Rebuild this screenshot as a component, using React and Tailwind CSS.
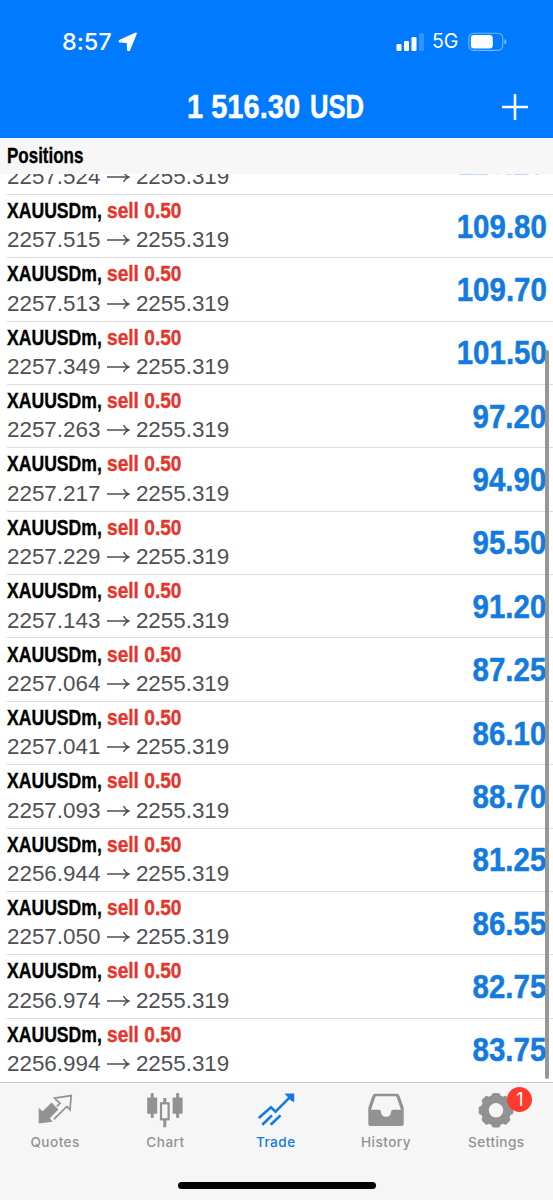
import React from "react";

const POSITIONS = [
  ["2257.524", "110.25"],
  ["2257.515", "109.80"],
  ["2257.513", "109.70"],
  ["2257.349", "101.50"],
  ["2257.263", "97.20"],
  ["2257.217", "94.90"],
  ["2257.229", "95.50"],
  ["2257.143", "91.20"],
  ["2257.064", "87.25"],
  ["2257.041", "86.10"],
  ["2257.093", "88.70"],
  ["2256.944", "81.25"],
  ["2257.050", "86.55"],
  ["2256.974", "82.75"],
  ["2256.994", "83.75"],
];

function StatusBar() {
  return (
    <div className="flex h-[83px] items-center pr-[46px] pl-[62px] font-['Inter',sans-serif]">
      <span className="w-[56px] pt-[1px] text-[23.5px] leading-none font-medium tracking-[-0.1px] whitespace-nowrap">8:57</span>
      <svg className="h-[20px] w-[20px]" viewBox="0 0 20 20" fill="currentColor" stroke="currentColor" strokeWidth="1.8" strokeLinejoin="round">
        <path d="M18 1.4 11.2 18.2 10 18.2 9.6 10.8 8.8 10.2 1.6 9.7 1.5 8.8Z" />
      </svg>
      <span className="grow" />
      <svg className="h-[18px] w-[28px]" viewBox="0 0 28 18" fill="currentColor">
        <rect x="0.5" y="11" width="5" height="7" rx="1.3" />
        <rect x="8" y="8" width="5" height="10" rx="1.3" />
        <rect x="15.5" y="4" width="5" height="14" rx="1.3" />
        <rect x="23" y="0" width="5" height="18" rx="1.3" opacity="0.2" />
      </svg>
      <span className="ml-[8px] w-[36px] pt-[1px] text-[19.5px] leading-none whitespace-nowrap">5G</span>
      <svg className="h-[20px] w-[39px]" viewBox="0 0 39 20" fill="none">
        <rect x="0.8" y="1.2" width="34" height="17.2" rx="5" stroke="currentColor" strokeWidth="1.1" opacity="0.45" />
        <rect x="2.8" y="3.1" width="22" height="13.4" rx="3.3" fill="currentColor" />
        <path d="M36.4 7 Q38.5 8 38.5 9.8 T36.4 12.6Z" fill="currentColor" opacity="0.5" />
      </svg>
    </div>
  );
}

function PositionRow({ price, profit }) {
  return (
    <li className="ml-[7px] flex h-[63.38px] shrink-0 border-b border-[#dedede] last:border-transparent">
      <div className="grow whitespace-nowrap">
        <div className="flex pt-[4.2px] text-[22px] leading-[24px] font-bold text-black [-webkit-text-stroke:0.35px_currentColor]">
          <span className="w-[100.4px]">
            <span className="inline-block origin-left scale-x-[0.8]">XAUUSDm,</span>
          </span>
          <span className="inline-block origin-left scale-x-[0.87] text-[#e5352c]">sell 0.50</span>
        </div>
        <div className="flex items-center pt-[5.4px] text-[22.4px] leading-[24px] text-[#505054]">
          <span>{price}</span>
          <svg className="mr-[5.5px] ml-[6px] h-[14px] w-[24px]" viewBox="0 0 24 14" fill="none" stroke="currentColor" strokeWidth="1.4">
            <path d="M1 7H22.5M17.5 2.2Q19.5 5.8 22.8 7Q19.5 8.2 17.5 11.8" />
          </svg>
          <span>2255.319</span>
        </div>
      </div>
      <span className="mt-[13.8px] mr-[6.5px] origin-right scale-x-[0.885] text-[33.3px] leading-[36px] font-bold text-[#137ae0] [-webkit-text-stroke:0.5px_currentColor]">{profit}</span>
    </li>
  );
}

function QuotesIcon() {
  return (
    <svg className="h-[36px] w-[40px]" viewBox="0 0 40 36">
      <path d="M3.7 14.8 7.6 18.2 16.6 9.5 23.4 16.5 14.8 25.2 17.5 28.7 3.7 30.5Z" fill="currentColor" />
      <path d="M21.8 13.3 25 10.3 21.2 7 19.5 5.1 36.2 2.6 35 16.8 31.8 13.4 18.8 26.4" fill="none" stroke="currentColor" strokeWidth="1.7" />
    </svg>
  );
}

function ChartIcon() {
  return (
    <svg className="h-[36px] w-[40px]" viewBox="0 0 40 36" fill="currentColor">
      <rect x="2.2" y="4.4" width="10" height="16.4" rx="0.8" />
      <rect x="5.7" y="0" width="3" height="25" rx="1" />
      <rect x="27.6" y="4.4" width="10" height="16.4" rx="0.8" />
      <rect x="31.1" y="0" width="3" height="25" rx="1" />
      <rect x="16" y="10.3" width="7.6" height="16" fill="none" stroke="currentColor" strokeWidth="2.2" />
      <path d="M18.3 5h3v5h-3zM18.3 27h3v7.2h-3z" />
    </svg>
  );
}

function TradeIcon() {
  return (
    <svg className="h-[36px] w-[40px]" viewBox="0 0 40 36" fill="none" stroke="currentColor" strokeWidth="2.6">
      <path d="M2.8 24.9 15 14.2 19.5 18.6 35.5 2.6M6.3 31.8 16 22.4M14.7 31.8 24.5 22.4" />
      <path d="M28.6 0.4H38.2V9.2L35 7.4 31 3.2Z" fill="currentColor" stroke="none" />
    </svg>
  );
}

function HistoryIcon() {
  return (
    <svg className="h-[36px] w-[40px]" viewBox="0 0 40 36">
      <path fillRule="evenodd" d="M9.3 .8H30.7Q32.8.8 33.6 3L37.7 14.8V30.4Q37.7 32.9 35.2 32.9H4.8Q2.3 32.9 2.3 30.4V14.8L6.4 3Q7.2.8 9.3.8ZM10.4 3.2Q9.6 3.2 9.2 4.4L5 16.8H13.3Q14.8 16.8 14.8 18.3Q15.3 23.8 20 23.8T25.2 18.3Q25.2 16.8 26.7 16.8H35L30.8 4.4Q30.4 3.2 29.6 3.2Z" fill="currentColor" />
    </svg>
  );
}

function SettingsIcon() {
  return (
    <span className="relative block">
      <svg className="h-[36px] w-[40px]" viewBox="0 0 40 36">
        <g transform="translate(20 17.3)" fill="currentColor">
          <circle r="11.2" fill="none" stroke="currentColor" strokeWidth="8" />
          {[0, 45, 90, 135, 180, 225, 270, 315].map((a) => (
            <path key={a} transform={`rotate(${a})`} d="M-6-13.2Q-4.2-14-3.9-16.2Q-3.6-17.3-2.4-17.3H2.4Q3.6-17.3 3.9-16.2Q4.2-14 6-13.2Z" />
          ))}
        </g>
      </svg>
      <span className="absolute -top-[5.5px] left-[31px] flex h-[25px] w-[25px] items-center justify-center rounded-full bg-[#ff3b30] text-[18px] leading-none text-white">1</span>
    </span>
  );
}

const TABS = [
  ["Quotes", QuotesIcon],
  ["Chart", ChartIcon],
  ["Trade", TradeIcon],
  ["History", HistoryIcon],
  ["Settings", SettingsIcon],
];

function TabBar() {
  return (
    <nav className="flex h-[118px] flex-col items-center justify-between border-t border-[#c9c9cb] bg-[#f6f6f6] font-['Inter',sans-serif]">
      <div className="grid w-full grid-cols-5 pr-[1.5px]">
        {TABS.map(([label, Icon]) => (
          <div key={label} className={`flex flex-col items-center pt-[9.5px] ${label === "Trade" ? "text-[#137ae5]" : "text-[#929292]"}`}>
            <Icon />
            <span className="mt-[5px] text-[13.6px] leading-[16px] font-medium tracking-[0.45px]">{label}</span>
          </div>
        ))}
      </div>
      <div className="mb-[11px] h-[7px] w-[198px] rounded-full bg-black" />
    </nav>
  );
}

export default function App() {
  return (
    <div className="flex h-[1200px] w-[553px] flex-col overflow-hidden bg-white font-['Liberation_Sans',Arial,sans-serif]">
      <header className="h-[138px] bg-[#007aff] text-white">
        <StatusBar />
        <div className="flex h-[48px] items-center pr-[25px] pl-[187px] text-[33px] font-bold whitespace-nowrap">
          <span className="w-[123px] [-webkit-text-stroke:0.5px_currentColor]">
            <span className="inline-block origin-left scale-x-[0.88]">1 516.30</span>
          </span>
          <span className="w-[54px] [-webkit-text-stroke:0.5px_currentColor]">
            <span className="inline-block origin-left scale-x-[0.775]">USD</span>
          </span>
          <span className="grow" />
          <svg className="h-[26px] w-[26px] shrink-0" viewBox="0 0 26 26" stroke="currentColor" strokeWidth="2.6">
            <path d="M13 0V26M0 13H26" />
          </svg>
        </div>
      </header>
      <h2 className="flex h-[36px] items-center bg-[#f7f7f7] pl-[7px] text-[21.5px] leading-[24px] font-bold text-black">
        <span className="inline-block origin-left scale-x-[0.79] [-webkit-text-stroke:0.35px_currentColor]">Positions</span>
      </h2>
      <main className="relative h-[908px]">
        <ul className="flex h-full flex-col justify-end overflow-hidden">
          {POSITIONS.map(([price, profit]) => (
            <PositionRow key={price} price={price} profit={profit} />
          ))}
        </ul>
        <div className="absolute top-[176px] right-[4px] h-[729px] w-[4px] rounded-full bg-[#8c8c8c]/90" />
      </main>
      <TabBar />
    </div>
  );
}
